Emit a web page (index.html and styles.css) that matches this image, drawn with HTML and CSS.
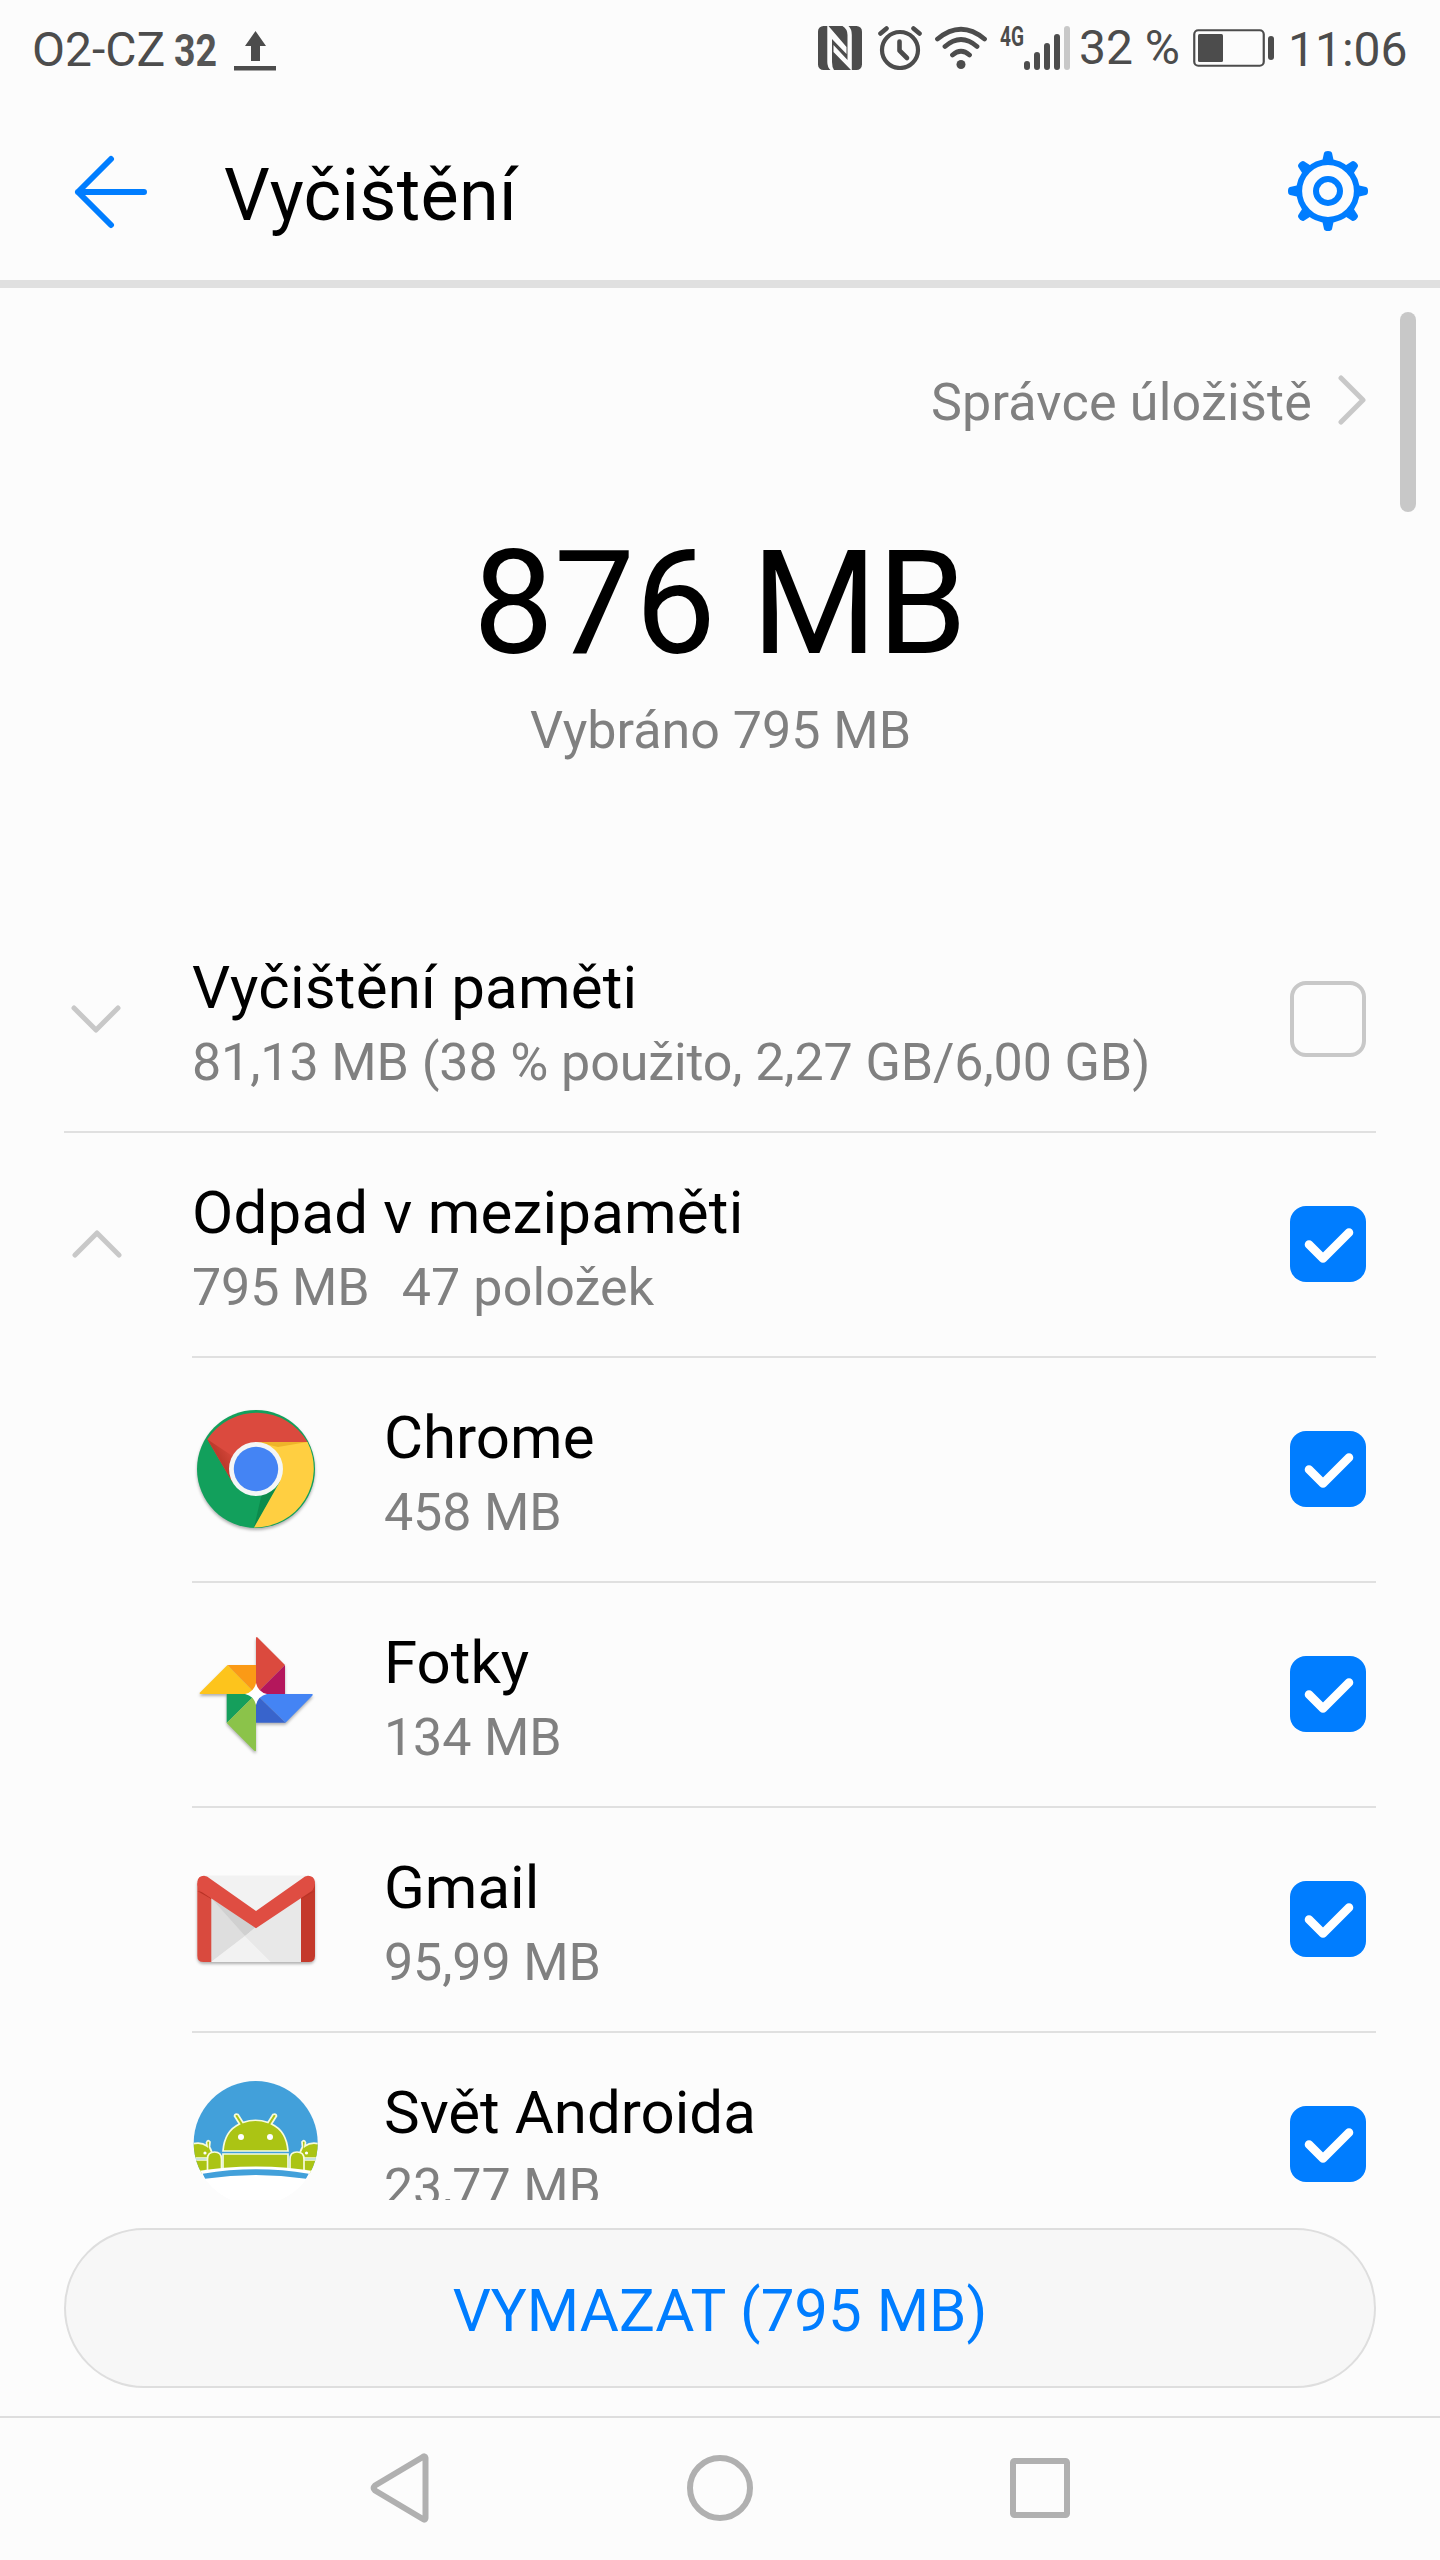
FILE: index.html
```html
<!DOCTYPE html>
<html lang="cs">
<head>
<meta charset="utf-8">
<title>Vyčištění</title>
<link rel="stylesheet" href="styles.css">
</head>
<body>
<svg class="defs" width="0" height="0" aria-hidden="true">
  <symbol id="check" viewBox="0 0 76 76"><path d="M19 38.5 33 52.5 59 26.5" fill="none" stroke="#fff" stroke-width="8.6" stroke-linecap="round" stroke-linejoin="round"/></symbol>
</svg>
<div class="screen">
  <div class="status">
    <span class="carrier">O2-CZ</span>
    <svg class="net32" width="46" height="60" viewBox="0 0 46 60"><text x="1" y="45.5" textLength="43" lengthAdjust="spacingAndGlyphs">32</text></svg>
    <svg class="upload" width="42" height="40" viewBox="0 0 42 40"><path d="M21.500 0 32 15H26V30H17V15H11zM0 35H42V39.500H0z" fill="#4c4c4c"/></svg>
    <div class="status-right">
      <svg width="44" height="44" viewBox="0 0 44 44"><rect width="44" height="44" rx="5.500" fill="#4c4c4c"/><path d="M9.300 0H10.500L28.500 21V28L14 13V36Q14 41 16 44H12.500Q9.300 41 9.300 36zM24.500 0H30.500Q33.800 3 33.800 9V44H33L15.500 26V19L29.500 34V9Q29.500 3 24.500 0z" fill="#fcfcfc"/></svg>
      <svg class="alarm" width="44" height="44" viewBox="0 0 44 44" fill="none" stroke="#4c4c4c" stroke-linecap="round"><circle cx="22" cy="24" r="18" stroke-width="4.200"/><path d="M21.500 15.500V24.500L29 32" stroke-width="4.600" stroke-linejoin="round"/><path d="M2.500 7.500 8.500 2.500M41.500 7.500 35.500 2.500" stroke-width="4.600"/></svg>
      <svg class="wifi" width="54" height="44" viewBox="0 0 54 44" fill="none" stroke="#4c4c4c" stroke-width="4.800" stroke-linecap="round"><path d="M3.500 13Q27-6.500 50.500 13M11 20.500Q27 6.500 43 20.500M18.500 29Q27 21.500 35.500 29"/><circle cx="27" cy="38.500" r="4.500" fill="#4c4c4c" stroke="none"/></svg>
      <svg class="signal" width="72" height="58" viewBox="0 -12 72 58" stroke="#4c4c4c" stroke-width="6" stroke-linecap="round"><text x="1" y="20" textLength="24" lengthAdjust="spacingAndGlyphs" stroke="none">4G</text><path d="M28 38V41M38 29V41M48 20V41M58 11V41"/><path d="M68 3V41" stroke="#c8c8c8"/></svg>
      <span class="percent">32 %</span>
      <svg class="battery" width="82" height="38" viewBox="0 0 82 38"><rect x="1.250" y="1.250" width="69.500" height="35.500" rx="4" fill="none" stroke="#4c4c4c" stroke-width="2.200"/><rect x="5" y="5" width="25" height="28" rx="1.500" fill="#4c4c4c"/><rect x="75" y="7" width="6" height="24" rx="3" fill="#4c4c4c"/></svg>
      <span class="clock">11:06</span>
    </div>
  </div>

  <header class="header">
    <svg class="back" width="74" height="74" viewBox="0 0 74 74"><path d="M37 4 4 37 37 70M4 37H70" fill="none" stroke="#007dff" stroke-width="6" stroke-linecap="round" stroke-linejoin="round"/></svg>
    <h1>Vyčištění</h1>
    <svg class="gear" width="80" height="80" viewBox="-40 -40 80 80">
      <g fill="#007dff">
        <g id="teeth"><path d="M-6-29-4-38Q-3.500-40 0-40T4-38L6-29z"/><path d="M-6 29-4 38Q-3.500 40 0 40T4 38L6 29z"/><path d="M-29-6-38-4Q-40-3.500-40 0T-38 4L-29 6z"/><path d="M29-6 38-4Q40-3.500 40 0T38 4L29 6z"/></g>
        <use href="#teeth" transform="rotate(45)"/>
      </g>
      <circle r="28.800" fill="#fcfcfc" stroke="#007dff" stroke-width="5.800"/><circle r="12" fill="none" stroke="#007dff" stroke-width="6"/>
    </svg>
  </header>

  <main class="content">
    <div class="scrollbar"></div>
    <a class="manager"><span>Správce úložiště</span><svg width="28" height="50" viewBox="0 0 28 50"><path d="M3 3 25 25 3 47" fill="none" stroke="#c8c8c8" stroke-width="5" stroke-linecap="round" stroke-linejoin="round"/></svg></a>
    <section class="summary"><div class="total">876 MB</div><div class="selected">Vybráno 795 MB</div></section>

    <div class="list">
      <div class="row group full">
        <svg class="chev" width="50" height="28" viewBox="0 0 50 28"><path d="M3 3 25 25 47 3"/></svg>
        <div class="text"><div class="title">Vyčištění paměti</div><div class="sub">81,13 MB (38 % použito, 2,27 GB/6,00 GB)</div></div>
        <span class="box"></span>
      </div>
      <div class="row group">
        <svg class="chev up" width="50" height="28" viewBox="0 0 50 28"><path d="M3 25 25 3 47 25"/></svg>
        <div class="text"><div class="title">Odpad v mezipaměti</div><div class="sub"><span>795 MB</span><span class="count">47 položek</span></div></div>
        <span class="box on"><svg width="76" height="76"><use href="#check"/></svg></span>
      </div>
      <div class="row app">
        <svg class="icon" width="128" height="128" viewBox="0 0 128 128">
          <defs><linearGradient id="redshade" gradientUnits="userSpaceOnUse" x1="42" y1="45" x2="28" y2="53"><stop offset="0" stop-color="#db4a3e"/><stop offset="1" stop-color="#bf3a2c"/></linearGradient></defs>
          <g class="shadow"><circle cx="64" cy="64" r="59" fill="#12a05c"/></g>
          <path d="M62 122.500 84 84 70 88Z" fill="#0d8b4c"/>
          <path d="M15.300 34.300A59 59 0 0 1 115.500 37H64L40.600 77.500z" fill="#db4a3e"/>
          <path d="M15.300 34.300 42 52 38 73z" fill="url(#redshade)"/>
          <path d="M115.500 37A59 59 0 0 1 62 122.500L87.400 77.500 64 37z" fill="#ffcf41"/>
          <path d="M64 37H115.500L86 42z" fill="#eeb42a"/>
          <circle cx="64" cy="64" r="27" fill="#f4f6f6"/><circle cx="64" cy="64" r="22.200" fill="#4484f4"/>
        </svg>
        <div class="text"><div class="title">Chrome</div><div class="sub">458 MB</div></div>
        <span class="box on"><svg width="76" height="76"><use href="#check"/></svg></span>
      </div>
      <div class="row app">
        <svg class="icon" width="128" height="128" viewBox="0 0 128 128">
          <g class="shadow">
            <path d="M64 8Q64.500 6 66 8L93 35 64 64z" fill="#db4a3e"/><path d="M93 35V64H64z" fill="#b4175c"/>
            <path d="M8 62.500 35.500 35 64 64H8.500Q7 64 8 62.500z" fill="#fdc41c"/><path d="M35.500 35H64V64z" fill="#fb9a16"/>
            <path d="M64 64H120Q121.500 64.500 120 66L93.500 92.700z" fill="#4484f4"/><path d="M64 64 93.500 92.700H64z" fill="#3864cc"/>
            <path d="M34.700 64H64L34.700 93z" fill="#159f5c"/><path d="M34.700 93 64 64V120.500Q63.500 122 62 120.500z" fill="#8bc34a"/>
          </g>
          <path d="M64 53Q66 62 75 64 66 66 64 75 62 66 53 64 62 62 64 53z" fill="#fff"/>
        </svg>
        <div class="text"><div class="title">Fotky</div><div class="sub">134 MB</div></div>
        <span class="box on"><svg width="76" height="76"><use href="#check"/></svg></span>
      </div>
      <div class="row app">
        <svg class="icon" width="128" height="128" viewBox="0 0 128 128">
          <g class="shadow"><rect x="5.300" y="22" width="117.700" height="85" rx="6" fill="#e9e9e9"/></g>
          <path d="M12 20.500H117L64 57z" fill="#f2f2f2"/>
          <path d="M19 43 53 81 19 107z" fill="#dedede"/><path d="M19 43 64 72 53 81z" fill="#d0d0d0"/><path d="M53 81 79 107H19z" fill="#f2f2f2"/><path d="M53 81 64 72 109 43V107H79z" fill="#e8e8e8"/>
          <path d="M5.300 28V101Q5.300 107 11.300 107H19.300V38z" fill="#d94a3e"/><path d="M123 28V101Q123 107 117 107H109V38z" fill="#c4392b"/>
          <path d="M5.300 36 19.300 44V39zM123 36 109 44V39z" fill="#b83327"/>
          <path d="M5.300 27Q6 20.700 12 20.700L15 21.500 64 56 113 21.500 116 20.700Q122 20.700 123 27 123 33 119 36.500L64 73.300 9 36.500Q5.300 33 5.300 27z" fill="#df4d42"/>
        </svg>
        <div class="text"><div class="title">Gmail</div><div class="sub">95,99 MB</div></div>
        <span class="box on"><svg width="76" height="76"><use href="#check"/></svg></span>
      </div>
      <div class="row app">
        <svg class="icon" width="128" height="128" viewBox="0 0 128 128">
          <clipPath id="disc"><circle cx="63.700" cy="63" r="62"/></clipPath>
          <g clip-path="url(#disc)">
            <rect width="128" height="128" fill="#fff"/><rect width="128" height="90" fill="#42a0da"/>
            <g fill="#abc414" stroke="#f7fbdc" stroke-width="1.700">
              <path d="M0 64Q9 61.500 15 66L14.500 62.500Q16 59 18 62L17.500 67Q20 71 21 78H0zM128 64Q119 61.500 113 66L113.500 62.500Q112 59 110 62L110.500 67Q108 71 107 78H128zM0 80H21V94H0zM107 80H128V94H107z"/>
              <path d="M15.500 94V79Q15.500 72 22.500 72T29.500 79V94zM98 94V79Q98 72 105 72T112 79V94z"/>
              <path d="M31 71Q32.500 51 47.500 44L42.500 36Q43 33.500 46 34.500L51 42.500Q63.500 38 76 42.500L81 34.500Q84 33.500 84.500 36L79.500 44Q94.500 51 96 71z"/>
              <path d="M31 74H96V94H31z"/>
            </g>
            <g fill="#fff"><circle cx="49" cy="57" r="3"/><circle cx="78" cy="57" r="3"/><circle cx="13" cy="73" r="1.600"/><circle cx="114.500" cy="73" r="1.600"/><path d="M0 92Q64 81 128 92V128H0z"/></g>
            <path d="M10.700 93.700Q64 85 116.700 93.700L114 98.700Q64 91.500 13 98.700z" fill="#42a0da"/>
          </g>
        </svg>
        <div class="text"><div class="title">Svět Androida</div><div class="sub">23,77 MB</div></div>
        <span class="box on"><svg width="76" height="76"><use href="#check"/></svg></span>
      </div>
    </div>
  </main>

  <footer class="actions"><button class="clear">VYMAZAT (795 MB)</button></footer>

  <nav class="nav">
    <svg width="66" height="70" viewBox="0 0 66 70"><path d="M58.500 5V65Q58 68 55 65.500L8 37.500Q5.500 35 8 32.500L55 4.500Q58 2 58.500 5z"/></svg>
    <svg width="66" height="70" viewBox="0 0 66 70"><circle cx="33" cy="35" r="30"/></svg>
    <svg width="66" height="70" viewBox="0 0 66 70"><rect x="6" y="8" width="54" height="54" rx="1.500"/></svg>
  </nav>
</div>
</body>
</html>
```
FILE: styles.css
```css
* { box-sizing: border-box; }
body { margin: 0; background: #fcfcfc; font-family: Roboto, "Liberation Sans", sans-serif; color: #000; }
svg { display: block; flex: none; }
.defs { position: absolute; }
.screen { width: 1440px; height: 2560px; display: flex; flex-direction: column; overflow: hidden; background: #fcfcfc; }

.status { height: 96px; display: flex; align-items: flex-start; padding: 0 32px 0 32px; color: #4c4c4c; font-size: 48px; line-height: 57px; white-space: nowrap; }
.carrier { width: 135px; margin-top: 21px; }
.net32 { margin: 20px 0 0 6px; }
.net32 text { font-size: 44px; font-weight: 700; fill: #555; }
.upload { margin: 31px 0 0 15px; }
.status-right { margin-left: auto; display: flex; align-items: flex-start; }
.status-right > svg { margin-top: 26px; }
.status-right .alarm { margin-left: 16px; }
.status-right .wifi { margin-left: 12px; }
.status-right .signal { margin: 14px 0 0 11px; }
.signal text { font-size: 27px; font-weight: 700; fill: #4c4c4c; }
.percent { width: 103px; margin: 19px 0 0 8px; }
.status-right .battery { margin: 29px 0 0 11px; }
.clock { width: 120px; margin: 21px 0 0 13px; }

.header { height: 192px; display: flex; align-items: flex-start; padding: 0 72px 0 74px; border-bottom: 8px solid #e0e0e0; }
.back { margin-top: 59px; }
.header h1 { flex: 1; margin: 57px 0 0 76px; font-size: 72px; line-height: 85px; font-weight: 400; letter-spacing: .25px; }
.gear { margin-top: 55px; }

.content { position: relative; height: 1912px; overflow: hidden; }
.scrollbar { position: absolute; right: 24px; top: 24px; width: 16px; height: 200px; border-radius: 8px; background: #c8c8c8; }
.manager { display: flex; justify-content: flex-end; align-items: center; gap: 26px; height: 61px; margin: 84px 74px 0 0; font-size: 52px; line-height: 61px; letter-spacing: .22px; color: #808080; }
.manager svg { margin-top: -5px; }
.summary { margin-top: 86px; text-align: center; }
.total { font-size: 144px; line-height: 169px; }
.selected { margin-top: 12px; padding-left: 1px; font-size: 52px; line-height: 61px; color: #808080; }

.list { margin-top: 147px; padding: 0 64px; }
.row { position: relative; height: 225px; display: flex; align-items: flex-start; border-bottom: 2px solid #e0e0e0; padding-right: 10px; }
.row:not(.full) { margin-left: 128px; }
.text { flex: 1; padding-top: 44px; white-space: nowrap; }
.title { font-size: 60px; line-height: 71px; }
.group .title { letter-spacing: .2px; }
.sub { margin-top: 9px; font-size: 52px; line-height: 61px; letter-spacing: -.12px; color: #808080; }
.sub .count { margin-left: 32px; letter-spacing: .12px; }
.chev { margin: 97px 71px 0 7px; fill: none; stroke: #c8c8c8; stroke-width: 5; stroke-linecap: round; stroke-linejoin: round; }
.chev.up { margin-left: -120px; margin-right: 70px; }
.icon { margin: 47px 64px 0 0; }
.shadow { filter: drop-shadow(0 2px 1.5px rgba(0, 0, 0, .3)); }
.box { width: 76px; height: 76px; margin-top: 73px; border: 4px solid #c8c8c8; border-radius: 16px; }
.box.on { border: 0; background: #007dff; }

.actions { height: 216px; padding: 28px 64px; }
.clear { display: block; width: 100%; height: 160px; padding: 4px 0 0; border: 2.500px solid #dedede; border-radius: 80px; background: #f7f7f7; color: #007dff; font-family: inherit; font-size: 60px; line-height: 71px; }

.nav { flex: 1; border-top: 2px solid #dedede; display: flex; justify-content: center; gap: 254px; padding-top: 35px; fill: none; stroke: #b0b0b0; stroke-width: 6; stroke-linejoin: round; }
```
